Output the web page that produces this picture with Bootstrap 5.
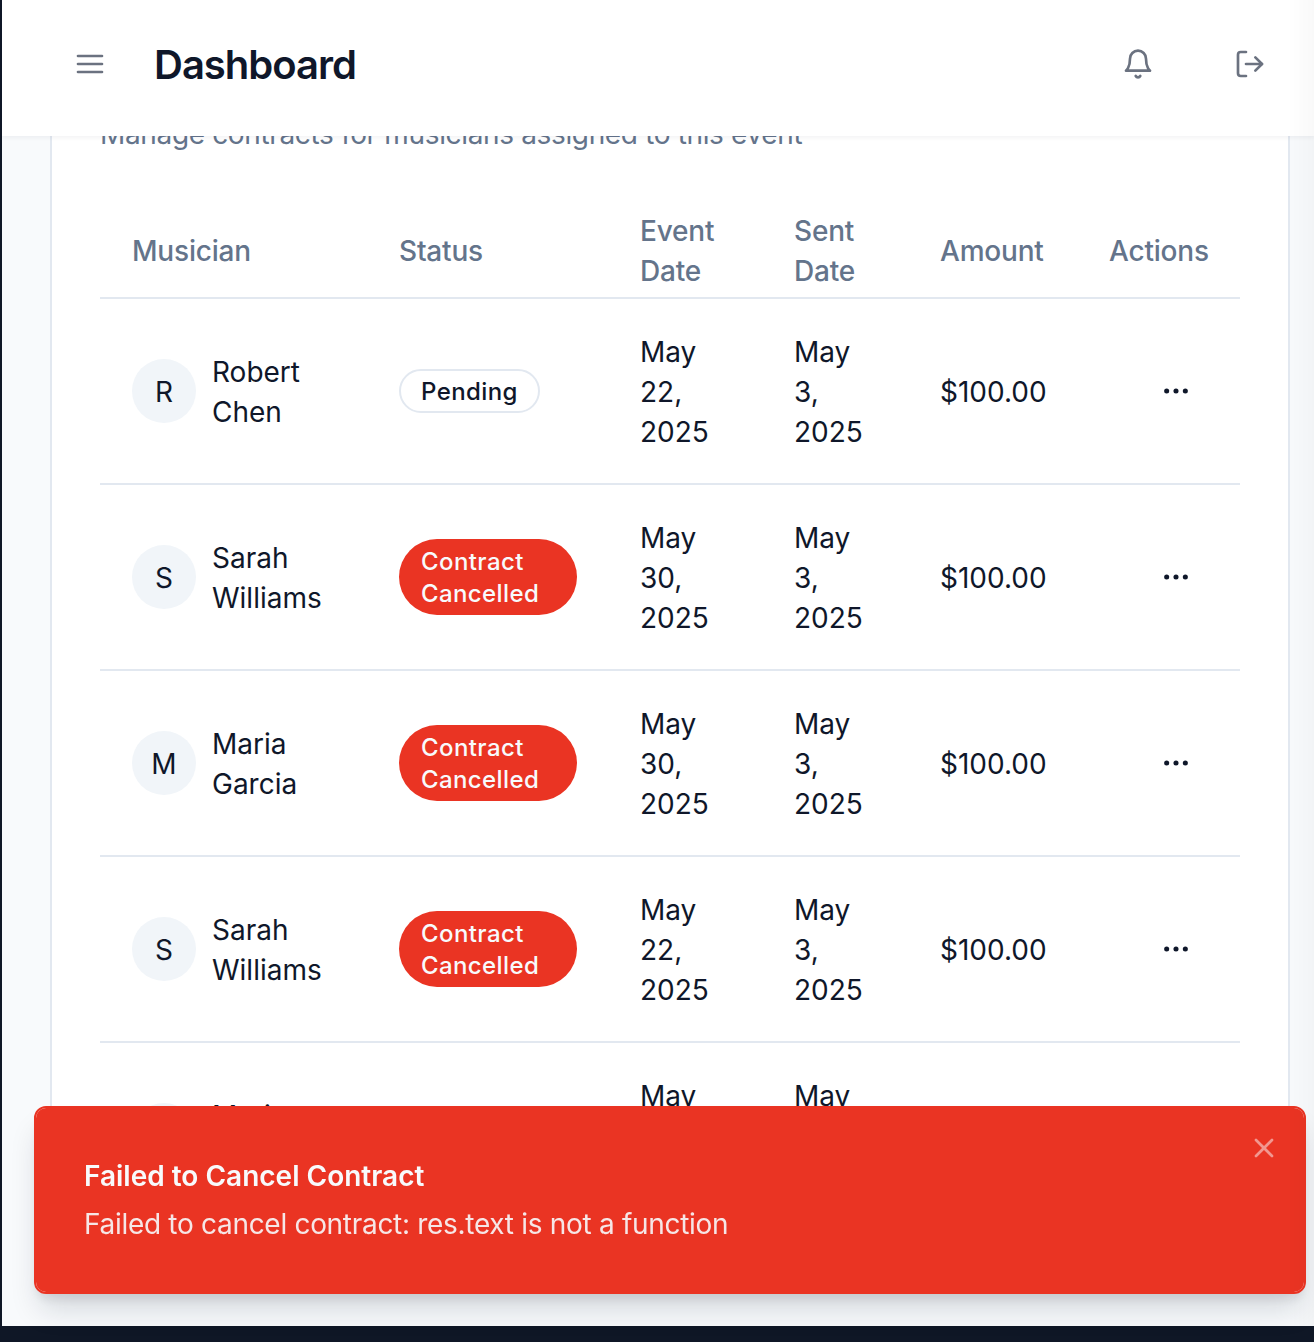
<!DOCTYPE html>
<html lang="en">
<head>
    <meta charset="UTF-8">
    <meta name="viewport" content="width=device-width, initial-scale=1.0">
    <title>Dashboard</title>
    <link href="https://cdn.jsdelivr.net/npm/bootstrap@5.3.0/dist/css/bootstrap.min.css" rel="stylesheet">
    <style>
        html, body {
            height: 100%;
        }
        body {
            background-color: #0f1726;
            font-family: Inter, "Liberation Sans", sans-serif;
            font-size: 28px;
            line-height: 40px;
            color: #0f172a;
            padding: 0 0 16px 2px;
            overflow: hidden;
        }
        .app-shell {
            height: 100%;
            background-color: #f8fafc;
            overflow: hidden;
        }
        .top-bar {
            height: 136px;
            padding: 0 48px 8px 72px;
            background-color: #fff;
            box-shadow: 0 2px 4px rgba(15, 23, 42, 0.05);
            position: relative;
            z-index: 2;
        }
        .top-title {
            font-size: 40px;
            line-height: 56px;
            font-weight: 600;
            margin: 0 0 0 48px;
            padding-top: 2px;
            color: #0f172a;
            letter-spacing: -1px;
        }
        .icon-btn {
            width: 32px;
            height: 32px;
            color: #6b7280;
        }
        .icon-gap {
            gap: 80px;
        }
        .scrolled-card {
            margin: -55px 24px 0 48px;
            padding: 32px 48px 0;
            background-color: #fff;
            border: 2px solid #e2e8f0;
            border-radius: 0;
        }
        .card-note {
            color: #64748b;
            margin: -1px 0 51px;
            letter-spacing: -0.35px;
        }
        .contracts-table {
            table-layout: fixed;
            width: 1140px;
            margin: 0;
            --bs-table-color: #0f172a;
        }
        .contracts-table th,
        .contracts-table td {
            padding: 32px;
            vertical-align: middle;
            border-bottom: 2px solid #e2e8f0;
        }
        .contracts-table th {
            padding-top: 6px;
            padding-bottom: 6px;
            font-weight: 500;
            color: #64748b;
            letter-spacing: -0.2px;
        }
        .contracts-table td.text-cell {
            padding-top: 33px;
            padding-bottom: 31px;
        }
        .contracts-table td.menu-cell {
            padding-right: 48px;
        }
        .col-musician { width: 267px; }
        .col-status { width: 241px; }
        .col-event { width: 154px; }
        .col-sent { width: 146px; }
        .col-amount { width: 169px; }
        .col-actions { width: 163px; }
        .avatar-dot {
            width: 64px;
            height: 64px;
            flex-shrink: 0;
            padding-top: 2px;
            background-color: #f1f5f9;
        }
        .name-gap {
            gap: 16px;
        }
        .name-text {
            padding-top: 2px;
        }
        .state-pill {
            display: inline-block;
            font-size: 24px;
            line-height: 32px;
            font-weight: 500;
            letter-spacing: 0.4px;
            padding: 5px 20px 3px;
            border-radius: 38px;
            text-align: left;
            white-space: normal;
            border: 2px solid transparent;
        }
        .state-pending {
            color: #0f172a;
            background-color: #fff;
            border-color: #e2e8f0;
        }
        .state-cancelled {
            color: #f8fafc;
            background-color: #ea3423;
            width: 178px;
        }
        .row-menu {
            color: #0f172a;
        }
        .fail-toast {
            position: fixed;
            left: 34px;
            top: 1106px;
            width: 1272px;
            height: 188px;
            padding: 48px;
            background-color: #ea3423;
            color: #f8fafc;
            border: 2px solid #ea3423;
            border-radius: 12px;
            box-shadow: 0 20px 30px -6px rgba(15, 23, 42, 0.16), 0 8px 12px -4px rgba(15, 23, 42, 0.1);
            z-index: 5;
            font-size: 28px;
            max-width: none;
        }
        .fail-title {
            font-weight: 600;
            margin-bottom: 8px;
        }
        .fail-text {
            opacity: 0.9;
            letter-spacing: -0.3px;
        }
        .fail-close {
            position: absolute;
            top: 24px;
            right: 24px;
            width: 32px;
            height: 32px;
            color: #f8fafc;
            opacity: 0.5;
        }
        .edge-shade {
            position: fixed;
            top: 0;
            right: 0;
            bottom: 16px;
            width: 26px;
            background: linear-gradient(to right, rgba(0, 0, 0, 0), rgba(0, 0, 0, 0.025));
            pointer-events: none;
            z-index: 6;
        }
    </style>
</head>
<body>
    <div class="app-shell">
        <header class="top-bar d-flex align-items-center justify-content-between">
            <div class="d-flex align-items-center">
                <svg class="icon-btn" viewBox="0 0 24 24" fill="none" stroke="currentColor" stroke-width="2" stroke-linecap="round" stroke-linejoin="round"><line x1="3" y1="6" x2="21" y2="6"/><line x1="3" y1="12" x2="21" y2="12"/><line x1="3" y1="18" x2="21" y2="18"/></svg>
                <h1 class="top-title">Dashboard</h1>
            </div>
            <div class="d-flex align-items-center icon-gap">
                <svg class="icon-btn" viewBox="0 0 24 24" fill="none" stroke="currentColor" stroke-width="2" stroke-linecap="round" stroke-linejoin="round"><path d="M6 8a6 6 0 0 1 12 0c0 7 3 9 3 9H3s3-2 3-9"/><path d="M10.3 21a1.94 1.94 0 0 0 3.4 0"/></svg>
                <svg class="icon-btn" viewBox="0 0 24 24" fill="none" stroke="currentColor" stroke-width="2" stroke-linecap="round" stroke-linejoin="round"><path d="M9 21H5a2 2 0 0 1-2-2V5a2 2 0 0 1 2-2h4"/><polyline points="16 17 21 12 16 7"/><line x1="21" y1="12" x2="9" y2="12"/></svg>
            </div>
        </header>

        <div class="card scrolled-card">
            <p class="card-note">Manage contracts for musicians assigned to this event</p>
            <table class="table contracts-table">
                <colgroup>
                    <col class="col-musician"><col class="col-status"><col class="col-event"><col class="col-sent"><col class="col-amount"><col class="col-actions">
                </colgroup>
                <thead>
                    <tr>
                        <th>Musician</th>
                        <th>Status</th>
                        <th>Event Date</th>
                        <th>Sent Date</th>
                        <th class="text-nowrap">Amount</th>
                        <th class="text-nowrap">Actions</th>
                    </tr>
                </thead>
                <tbody id="rows"></tbody>
            </table>
        </div>
    </div>

    <div class="toast show fail-toast" role="alert">
        <div class="fail-title">Failed to Cancel Contract</div>
        <div class="fail-text">Failed to cancel contract: res.text is not a function</div>
        <svg class="fail-close" viewBox="0 0 24 24" fill="none" stroke="currentColor" stroke-width="2" stroke-linecap="round" stroke-linejoin="round"><line x1="18" y1="6" x2="6" y2="18"/><line x1="6" y1="6" x2="18" y2="18"/></svg>
    </div>
    <div class="edge-shade"></div>

    <script src="https://cdn.jsdelivr.net/npm/bootstrap@5.3.0/dist/js/bootstrap.bundle.min.js"></script>
    <script>
    const data = [
        ['R', 'Robert Chen', 'Pending', 'May 22, 2025'],
        ['S', 'Sarah Williams', 'Contract Cancelled', 'May 30, 2025'],
        ['M', 'Maria Garcia', 'Contract Cancelled', 'May 30, 2025'],
        ['S', 'Sarah Williams', 'Contract Cancelled', 'May 22, 2025'],
        ['M', 'Maria Garcia', 'Pending', 'May 30, 2025']
    ];

    const dots = '<svg class="icon-btn row-menu d-block ms-auto" viewBox="0 0 24 24" fill="currentColor"><circle cx="5" cy="12" r="1.9"/><circle cx="12" cy="12" r="1.9"/><circle cx="19" cy="12" r="1.9"/></svg>';

    document.getElementById('rows').innerHTML = data.map((r) => `
        <tr>
            <td>
                <div class="d-flex align-items-center name-gap">
                    <div class="avatar-dot rounded-circle d-flex align-items-center justify-content-center">${r[0]}</div>
                    <div class="name-text">${r[1]}</div>
                </div>
            </td>
            <td><span class="state-pill ${r[2] === 'Pending' ? 'state-pending' : 'state-cancelled'}">${r[2]}</span></td>
            <td class="text-cell">${r[3]}</td>
            <td class="text-cell">May 3, 2025</td>
            <td class="text-cell text-nowrap">$100.00</td>
            <td class="menu-cell">${dots}</td>
        </tr>`).join('');
</script>
</body>
</html>
